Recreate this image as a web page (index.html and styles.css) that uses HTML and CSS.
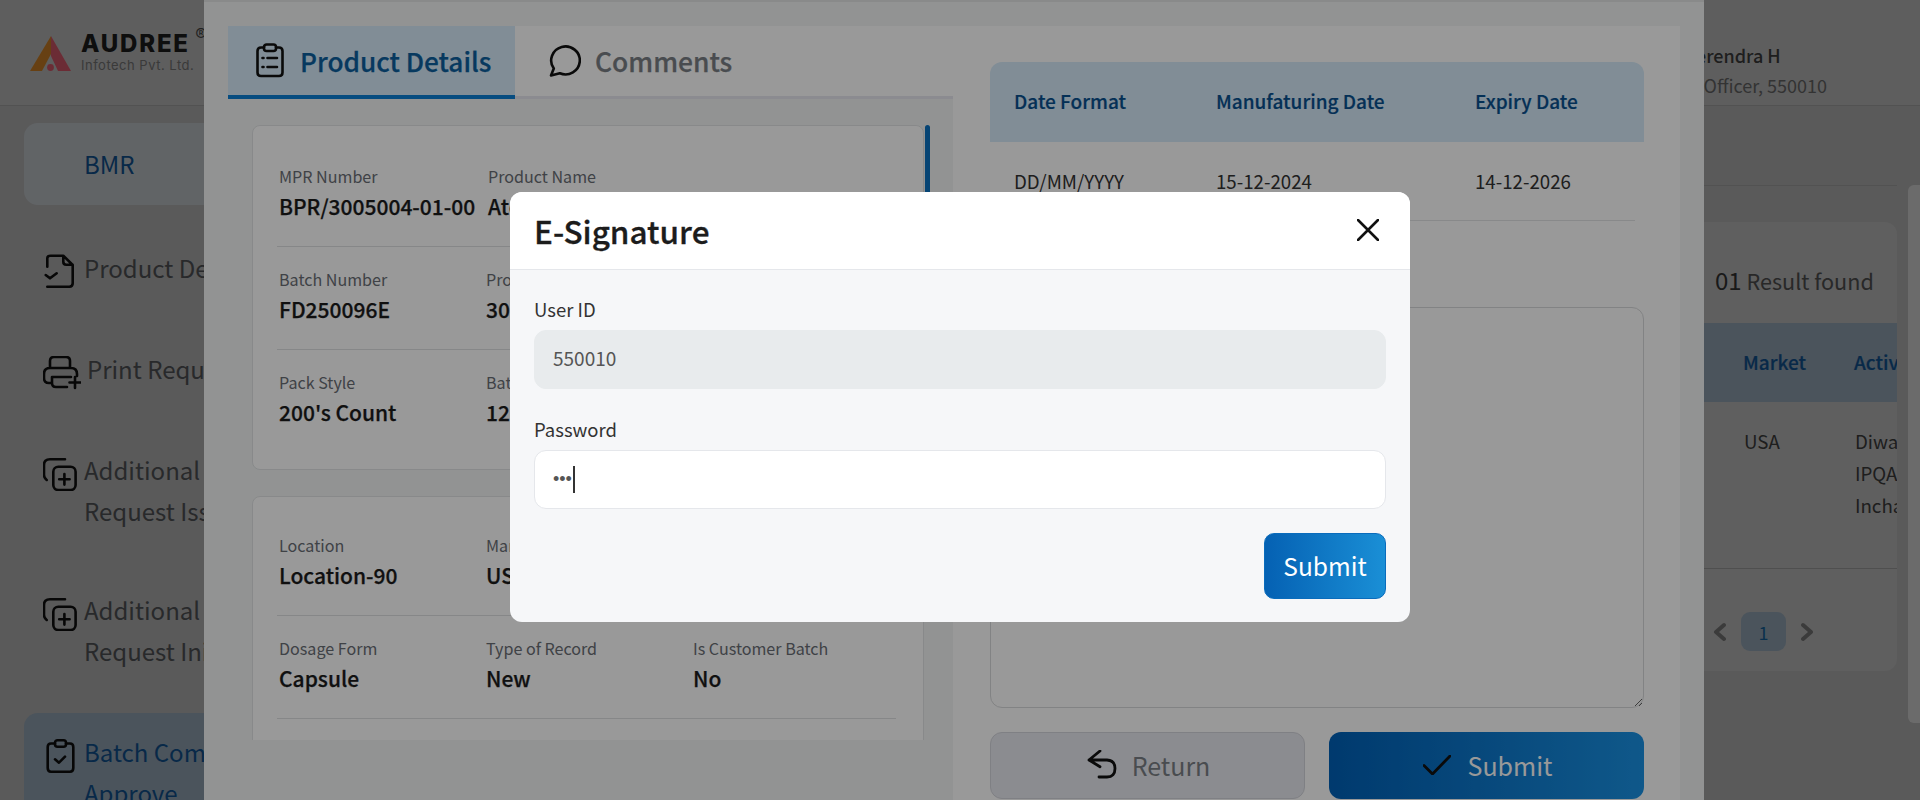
FILE: index.html
```html
<!DOCTYPE html>
<html lang="en">
<head>
<meta charset="utf-8">
<title>E-Signature</title>
<link rel="stylesheet" href="styles.css">
</head>
<body>
<div class="page">
  <header class="topbar">
    <div class="logo">
      <svg class="logo-mark" width="42" height="36" viewBox="0 0 42 36"><polygon points="21,0 21,18 12,35 0,35" fill="#f59a2e"/><polygon points="21,0 41,35 28,35 21,20" fill="#ff697e"/><circle cx="20.5" cy="31.5" r="3.4" fill="#ff697e"/></svg>
      <div class="logo-text">
        <span class="logo-name">AUDREE</span>
        <span class="logo-sub">Infotech Pvt. Ltd.</span>
      </div>
      <span class="logo-reg">®</span>
    </div>
    <div class="user">
      <span class="user-name">Veerendra H</span>
      <span class="user-role">QA Officer, 550010</span>
    </div>
  </header>
  <div class="workspace">
    <nav class="sidebar">
      <div class="nav-item nav-box"><span class="nav-text">BMR</span></div>
      <div class="nav-item nav-first">
        <svg class="ico ico-doc" width="34" height="34" viewBox="0 0 34 34"><path d="M4.3 12.7V4.3Q4.3 1.7 7.6 1.7H20.3L29.7 11V29.3Q29.7 32.7 26.3 32.7H4.3M20.3 1.7V7.7Q20.3 10.7 23.3 10.7H29.7M2.7 21L7 24.3L13.7 19.3"/></svg>
        <span class="nav-text">Product Details</span>
      </div>
      <div class="nav-item">
        <svg class="ico ico-print" width="38" height="34" viewBox="0 0 38 34"><path d="M7 12V5Q7 1 11 1H23Q27 1 27 5V12M9 27H6Q1 27 1 22V18Q1 12 7 12H28Q34 12 34 18V20M28 21H9V27Q9 31 13 31H24M32 21V32M26.5 26.5H37.5"/></svg>
        <span class="nav-text nav-text-print">Print Request</span>
      </div>
      <div class="nav-item">
        <svg class="ico ico-add" width="34" height="34" viewBox="0 0 34 34"><path d="M22 2.3H7Q1 2.3 1 8V18Q1 21 3.7 23"/><rect x="10.3" y="9.7" width="22.3" height="23.3" rx="5"/><path d="M21.4 17V27.6M16.2 22.3H26.6"/></svg>
        <span class="nav-text">Additional Copy<br>Request Issuance</span>
      </div>
      <div class="nav-item nav-shift">
        <svg class="ico ico-add" width="34" height="34" viewBox="0 0 34 34"><path d="M22 2.3H7Q1 2.3 1 8V18Q1 21 3.7 23"/><rect x="10.3" y="9.7" width="22.3" height="23.3" rx="5"/><path d="M21.4 17V27.6M16.2 22.3H26.6"/></svg>
        <span class="nav-text">Additional Copy<br>Request Initiation</span>
      </div>
      <div class="nav-item nav-box nav-active">
        <svg class="ico ico-clip" width="34" height="34" viewBox="0 0 34 34"><path d="M12 4.5H8Q4.7 4.5 4.7 8V29Q4.7 32.7 8 32.7H27Q30.3 32.7 30.3 29V8Q30.3 4.5 27 4.5H23"/><rect x="12" y="1.3" width="11" height="6.5" rx="2.5"/><path d="M12 20.3L16 23.7L22 17.7"/></svg>
        <span class="nav-text">Batch Completion<br>Approve</span>
      </div>
    </nav>
    <main class="main">
      <div class="main-top"></div>
      <section class="results">
        <p class="results-count"><span class="results-num">01</span> Result found</p>
        <div class="results-head"><span class="rc-market">Market</span><span class="rc-active">Active Stage</span></div>
        <div class="results-row"><span class="rc-market">USA</span><span class="rc-active">Diwakar<br>IPQA<br>Incharge</span></div>
        <div class="pager">
          <svg class="pager-arrow" width="13" height="20" viewBox="0 0 13 20"><path d="M11 3L3 10L11 17"/></svg>
          <span class="pager-num">1</span>
          <svg class="pager-arrow" width="13" height="20" viewBox="0 0 13 20"><path d="M2 3L10 10L2 17"/></svg>
        </div>
      </section>
    </main>
  </div>
</div>
<div class="page-thumb"></div>
<div class="overlay overlay-a"></div>

<section class="detail-modal">
  <div class="detail-left">
    <div class="tabs">
      <div class="tab tab-active">
        <svg class="tab-ico" width="28" height="35" viewBox="0 0 28 35"><path d="M8 4.5H5Q1.5 4.5 1.5 8V29.5Q1.5 33 5 33H23Q26.5 33 26.5 29.5V8Q26.5 4.5 23 4.5H20"/><rect x="8" y="1.5" width="12" height="6.5" rx="2.5"/><path d="M11.5 15H21M11.5 24H21M6.5 15H7.5M6.5 24H7.5"/></svg>
        <span>Product Details</span>
      </div>
      <div class="tab">
        <svg class="tab-ico" width="32" height="32" viewBox="0 0 32 32"><path d="M2 30.5L4.8 23.5A14.3 14 0 1 1 10.8 28.3Z"/></svg>
        <span>Comments</span>
      </div>
    </div>
    <div class="detail-scroll">
      <div class="detail-cards">
        <div class="info-card">
          <div class="info-row info-row-first">
            <div class="info-cell"><span class="info-label">MPR Number</span><span class="info-value">BPR/3005004-01-00</span></div>
            <div class="info-cell"><span class="info-label">Product Name</span><span class="info-value">Atorvastatin</span></div>
          </div>
          <div class="info-row">
            <div class="info-cell"><span class="info-label">Batch Number</span><span class="info-value">FD250096E</span></div>
            <div class="info-cell"><span class="info-label">Product Code</span><span class="info-value">3005004</span></div>
          </div>
          <div class="info-row info-row-last">
            <div class="info-cell"><span class="info-label">Pack Style</span><span class="info-value">200's Count</span></div>
            <div class="info-cell"><span class="info-label">Batch Size</span><span class="info-value">120000</span></div>
          </div>
        </div>
        <div class="info-card info-card-tight">
          <div class="info-row">
            <div class="info-cell"><span class="info-label">Location</span><span class="info-value">Location-90</span></div>
            <div class="info-cell"><span class="info-label">Market</span><span class="info-value">USA</span></div>
          </div>
          <div class="info-row">
            <div class="info-cell"><span class="info-label">Dosage Form</span><span class="info-value">Capsule</span></div>
            <div class="info-cell"><span class="info-label">Type of Record</span><span class="info-value">New</span></div>
            <div class="info-cell"><span class="info-label">Is Customer Batch</span><span class="info-value">No</span></div>
          </div>
          <div class="info-row">
            <div class="info-cell"><span class="info-label">Shelf Life</span><span class="info-value">24 Months</span></div>
          </div>
        </div>
      </div>
      <div class="detail-thumb"></div>
    </div>
  </div>
  <div class="detail-right">
    <div class="date-table">
      <div class="date-head"><span class="dc-a">Date Format</span><span class="dc-b">Manufaturing Date</span><span class="dc-c">Expiry Date</span></div>
      <div class="date-row"><span class="dc-a">DD/MM/YYYY</span><span class="dc-b">15-12-2024</span><span class="dc-c">14-12-2026</span></div>
    </div>
    <label class="comment-label" for="comment">Comments</label>
    <textarea class="comment-box" id="comment"></textarea>
    <div class="detail-actions">
      <button class="act-btn act-return" type="button">
        <svg class="act-ico" width="30" height="29" viewBox="0 0 30 29"><path d="M13 1L2 10L13 16.7M2 10H20Q28 10.5 28 18.5Q28 27 20 27H12"/></svg>
        <span>Return</span>
      </button>
      <button class="act-btn act-submit" type="button">
        <svg class="act-ico" width="28" height="20" viewBox="0 0 28 20"><path d="M1 10.5L9.5 19L27 1"/></svg>
        <span>Submit</span>
      </button>
    </div>
  </div>
</section>

<div class="overlay overlay-b"></div>

<section class="sign-modal">
  <header class="sign-head">
    <h2 class="sign-title">E-Signature</h2>
    <svg class="sign-close" width="22" height="22" viewBox="0 0 22 22"><path d="M1 1L21 21M21 1L1 21"/></svg>
  </header>
  <form class="sign-body">
    <label class="sign-label" for="uid">User ID</label>
    <input class="sign-input sign-input-off" id="uid" type="text" value="550010" readonly>
    <label class="sign-label sign-label-pw" for="pw">Password</label>
    <div class="pw-field">
      <input class="sign-input sign-input-pw" id="pw" type="password" value="abc">
      <span class="pw-caret"></span>
    </div>
    <div class="sign-actions"><button class="sign-submit" type="button">Submit</button></div>
  </form>
</section>
</body>
</html>
```
FILE: styles.css
```css
* { box-sizing: border-box; }
html, body { margin: 0; height: 800px; overflow: hidden; }
body { font-family: "Noto Sans CJK SC", "Noto Sans", sans-serif; color: #222; background: #d6d6d6; }
svg { display: block; flex: none; fill: none; stroke-linecap: round; stroke-linejoin: round; }

.page { width: 1920px; height: 800px; display: flex; flex-direction: column; overflow: hidden; }
.topbar { height: 106px; flex: none; background: #e0e0e0; border-bottom: 1px solid #c4c4c4; display: flex; justify-content: space-between; align-items: flex-start; padding: 36px 93px 0 30px; }
.logo { display: flex; align-items: flex-start; position: relative; }
.logo-mark { margin-right: 9px; }
.logo-text { display: flex; flex-direction: column; font-family: Inter, sans-serif; }
.logo-name { font-size: 24px; line-height: 22px; font-weight: 800; letter-spacing: 1.8px; color: #222; margin-top: -3px; }
.logo-sub { font-size: 13px; line-height: 18px; color: #8a8a8a; letter-spacing: .5px; margin-top: 1px; }
.logo-reg { font-size: 17px; line-height: 16px; font-family: Inter, sans-serif; color: #555; margin: -9px 0 0 1px; }
.user { display: flex; flex-direction: column; }
.user-name { font-size: 18px; line-height: 26px; font-weight: 500; color: #484848; margin-top: 6px; }
.user-role { font-size: 18px; line-height: 26px; color: #7a7a7a; margin-top: 4px; }

.workspace { flex: 1; display: flex; min-height: 0; }
.sidebar { width: 240px; flex: none; padding: 17px 0 0 24px; display: flex; flex-direction: column; gap: 19px; }
.nav-item { display: flex; align-items: flex-start; padding: 19px 0 21px 19px; font-size: 24px; line-height: 41.5px; color: #606366; flex: none; border-radius: 14px; white-space: nowrap; }
.nav-first { margin-top: 4px; }
.nav-shift { margin-top: -2px; margin-bottom: 1px; }
.nav-box { background: #e8eef4; min-height: 82px; width: 300px; padding: 20px 0 20px 60px; color: #1462ad; }
.nav-active { background: #b2c8db; padding: 18px 0 20px 19px; }
.nav-text { margin-left: 7px; }
.nav-box > .nav-text:first-child { margin-left: 0; }
.nav-text-print { margin-left: 10px; }
.ico { stroke: #111; stroke-width: 2.6; margin-top: 7px; }
.ico-print { margin-top: 8px; margin-right: -4px; }
.ico-add { margin-top: 8px; }
.ico-clip { margin-top: 8px; }

.main { flex: 1; display: flex; flex-direction: column; padding-right: 23px; min-width: 0; }
.main-top { height: 80px; flex: none; border-bottom: 1px solid #c4c4c4; }
.results { margin-top: 36px; height: 449px; flex: none; background: #e2e2e2; border-radius: 12px; overflow: hidden; padding-top: 42px; }
.results-count { margin: 0; padding-left: 1475px; font-size: 21.6px; line-height: 32px; color: #606060; white-space: nowrap; }
.results-num { font-size: 24px; color: #3c3c3c; }
.results-head { margin-top: 26px; height: 79px; background: #b2c8db; display: flex; align-items: center; padding: 0 0 2px 1503px; font-size: 19px; font-weight: 500; color: #1462ad; -webkit-text-stroke: .2px; white-space: nowrap; }
.rc-market { width: 111px; flex: none; }
.rc-active { flex: none; }
.results-row { height: 167px; border-bottom: 1px solid #bcbcbc; display: flex; align-items: flex-start; padding: 23px 0 0 1504px; font-size: 18.7px; line-height: 32px; color: #484848; white-space: nowrap; }
.pager { margin-top: 43px; padding-left: 1473px; display: flex; align-items: center; gap: 15px; }
.pager-arrow { stroke: #8e8e8e; stroke-width: 4; }
.pager-num { width: 45px; height: 39px; border-radius: 9px; background: #b2c8db; color: #1873b8; font-size: 18px; display: flex; align-items: center; justify-content: center; }

.page-thumb { position: fixed; left: 1908px; top: 185px; width: 12px; height: 538px; border-radius: 6px 0 0 6px; background: #fff; }
.overlay { position: fixed; inset: 0; }
.overlay-a { background: rgba(0, 0, 0, .3); }
.overlay-b { background: rgba(0, 0, 0, .4); z-index: 3; }

.detail-modal { position: fixed; left: 204px; top: 0; width: 1500px; height: 800px; z-index: 2; background: #f3f6f5; border-top: 2px solid #e4e6e6; display: flex; align-items: flex-start; padding: 24px 0 0 24px; overflow: hidden; }
.detail-left { width: 725px; flex: none; }
.tabs { height: 73px; display: flex; background: #fff; border-bottom: 3px solid #e8e8f0; }
.tab { height: 73px; display: flex; align-items: center; font-size: 26.4px; font-weight: 500; color: #7b7f85; padding: 0 0 4px 34px; gap: 14px; white-space: nowrap; -webkit-text-stroke: .25px; }
.tab-ico { stroke: #111; stroke-width: 2.6; }
.tab-active { width: 287px; padding-left: 28px; gap: 16px; background: #d7ecfa; color: #0c5f9f; border-bottom: 4px solid #0a7fd6; padding-bottom: 0; font-size: 26.2px; }
.detail-scroll { margin: 26px 0 0 24px; height: 615px; overflow: hidden; display: flex; align-items: flex-start; }
.detail-cards { width: 672px; flex: none; display: flex; flex-direction: column; gap: 26px; }
.detail-thumb { width: 5px; height: 380px; margin-left: 1px; border-radius: 3px; background: #0a72c2; flex: none; }
.info-card { background: #fff; border: 1px solid #e3e5e7; border-radius: 8px; padding: 18px 27px 0 24px; }
.info-card-tight { padding-top: 16px; }
.info-row { display: flex; padding: 21px 0 24px 2px; border-bottom: 1px solid #dfe1e3; }
.info-row-last { border-bottom: 0; padding-bottom: 41px; }
.info-cell { width: 207px; flex: none; display: flex; flex-direction: column; gap: 4px; }
.info-cell:nth-child(2) { width: 207px; }
.info-row-first .info-cell:first-child { width: 209px; }
.info-label { font-size: 16.1px; line-height: 22px; color: #6a6e75; white-space: nowrap; }
.info-value { font-size: 21px; line-height: 31px; font-weight: 500; color: #1c1c1c; white-space: nowrap; -webkit-text-stroke: .25px; }

.detail-right { width: 727px; height: 776px; flex: none; background: #fff; padding: 36px 36px 0 37px; display: flex; flex-direction: column; }
.date-table { height: 159px; flex: none; }
.date-head { height: 80px; background: #d7ecfa; border-radius: 12px 12px 0 0; display: flex; align-items: center; padding: 0 0 3px 24px; font-size: 19px; font-weight: 500; color: #08508f; -webkit-text-stroke: .2px; }
.date-row { height: 79px; margin-right: 9px; border-bottom: 1px solid #e3e5e7; display: flex; align-items: center; padding: 0 0 1px 24px; font-size: 18.7px; color: #333; }
.dc-a { width: 202px; flex: none; }
.dc-b { width: 259px; flex: none; }
.comment-label { height: 86px; flex: none; padding-top: 32px; font-size: 18px; }
.comment-box { height: 401px; flex: none; width: 100%; border: 1px solid #d9dadc; border-radius: 12px; background: #fff; resize: vertical; display: block; margin: 0; }
.detail-actions { margin-top: 24px; display: flex; gap: 24px; }
.act-btn { width: 315px; height: 67px; border-radius: 12px; display: flex; align-items: center; justify-content: center; font: inherit; font-size: 25px; cursor: pointer; padding: 0 0 2px 2px; }
.act-return { background: #e8eaf0; border: 1px solid #d4d5dc; color: #7b7f85; gap: 15px; }
.act-submit { background: linear-gradient(90deg, #0061b8, #1a93e6); border: 0; color: #fff; gap: 17px; }
.act-ico { stroke: #111; stroke-width: 2.8; }

.sign-modal { position: fixed; left: 510px; top: 192px; width: 900px; height: 430px; z-index: 4; background: #f6f7f9; border-radius: 12px; overflow: hidden; display: flex; flex-direction: column; }
.sign-head { height: 78px; flex: none; background: #fff; border-bottom: 1px solid #e5e7eb; display: flex; align-items: center; justify-content: space-between; padding: 0 31px 2px 24px; }
.sign-title { margin: 0; font-size: 31.5px; line-height: 46px; font-weight: 500; color: #1c1c1c; -webkit-text-stroke: .3px; }
.sign-close { stroke: #111; stroke-width: 2.6; }
.sign-body { padding: 25px 24px 0; display: flex; flex-direction: column; }
.sign-label { font-size: 18.5px; line-height: 28px; color: #333; }
.sign-label-pw { margin-top: 26px; }
.sign-input { height: 59px; margin-top: 7px; border: 1px solid #e5e7eb; border-radius: 12px; background: #fff; padding: 0 18px 5px; font: inherit; font-size: 19px; color: #555; outline: 0; width: 100%; }
.sign-input-off { background: #e8ebed; border-color: #e8ebed; }
.sign-input-pw { font-family: "Liberation Sans", sans-serif; font-size: 18px; padding-bottom: 0; display: block; }
.pw-field { position: relative; }
.pw-caret { position: absolute; left: 39px; top: 23px; width: 2px; height: 27px; background: #333; }
.sign-actions { display: flex; justify-content: flex-end; margin-top: 24px; }
.sign-submit { width: 122px; height: 66px; border: 1px solid #0a6cbc; border-radius: 10px; background: linear-gradient(90deg, #0561b3, #1a8fd6); color: #fff; font: inherit; font-size: 24.5px; cursor: pointer; padding: 0 0 2px; }
```
